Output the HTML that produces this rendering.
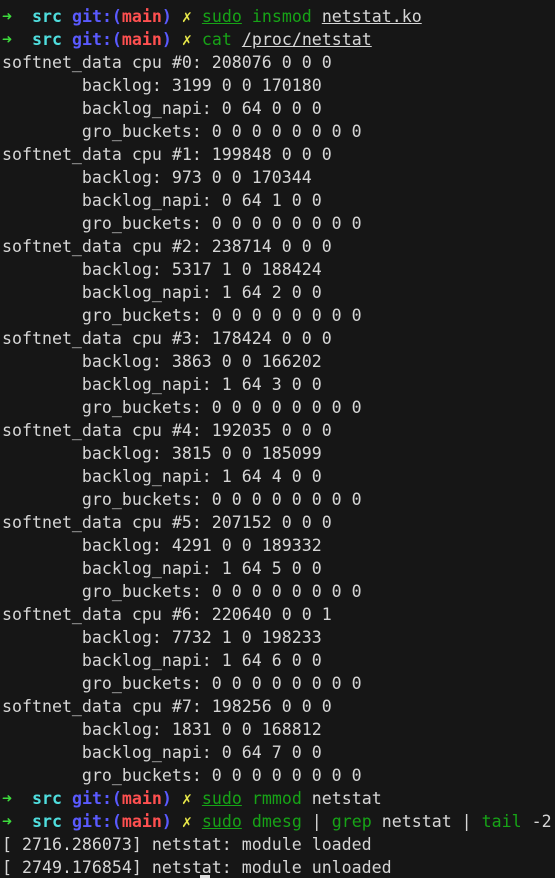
<!DOCTYPE html>
<html><head><meta charset="utf-8"><style>
html,body{margin:0;padding:0;background:#161616;width:555px;height:878px;overflow:hidden}
pre{margin:0;padding:4.5px 0 0 2px;font-family:"DejaVu Sans Mono","Liberation Mono",monospace;font-size:16.6px;line-height:23px;color:#d6d6d6;white-space:pre}
.a{color:#3ddc3d;font-weight:bold}.s{color:#4fdede;font-weight:bold}.g{color:#5a5aff;font-weight:bold}.m{color:#ff5050;font-weight:bold}.x{color:#e8e84a}.c{color:#17a317}.u{text-decoration:underline}
.cur{position:absolute;left:200px;top:875px;width:10px;height:3px;background:#ddd}
</style></head><body><pre><span class="a">➜</span>  <span class="s">src</span> <span class="g">git:(</span><span class="m">main</span><span class="g">)</span> <span class="x">✗</span> <span class="c u">sudo</span> <span class="c">insmod</span> <span class="u">netstat.ko</span>
<span class="a">➜</span>  <span class="s">src</span> <span class="g">git:(</span><span class="m">main</span><span class="g">)</span> <span class="x">✗</span> <span class="c">cat</span> <span class="u">/proc/netstat</span>
softnet_data cpu #0: 208076 0 0 0
        backlog: 3199 0 0 170180
        backlog_napi: 0 64 0 0 0
        gro_buckets: 0 0 0 0 0 0 0 0
softnet_data cpu #1: 199848 0 0 0
        backlog: 973 0 0 170344
        backlog_napi: 0 64 1 0 0
        gro_buckets: 0 0 0 0 0 0 0 0
softnet_data cpu #2: 238714 0 0 0
        backlog: 5317 1 0 188424
        backlog_napi: 1 64 2 0 0
        gro_buckets: 0 0 0 0 0 0 0 0
softnet_data cpu #3: 178424 0 0 0
        backlog: 3863 0 0 166202
        backlog_napi: 1 64 3 0 0
        gro_buckets: 0 0 0 0 0 0 0 0
softnet_data cpu #4: 192035 0 0 0
        backlog: 3815 0 0 185099
        backlog_napi: 1 64 4 0 0
        gro_buckets: 0 0 0 0 0 0 0 0
softnet_data cpu #5: 207152 0 0 0
        backlog: 4291 0 0 189332
        backlog_napi: 1 64 5 0 0
        gro_buckets: 0 0 0 0 0 0 0 0
softnet_data cpu #6: 220640 0 0 1
        backlog: 7732 1 0 198233
        backlog_napi: 1 64 6 0 0
        gro_buckets: 0 0 0 0 0 0 0 0
softnet_data cpu #7: 198256 0 0 0
        backlog: 1831 0 0 168812
        backlog_napi: 0 64 7 0 0
        gro_buckets: 0 0 0 0 0 0 0 0
<span class="a">➜</span>  <span class="s">src</span> <span class="g">git:(</span><span class="m">main</span><span class="g">)</span> <span class="x">✗</span> <span class="c u">sudo</span> <span class="c">rmmod</span> netstat
<span class="a">➜</span>  <span class="s">src</span> <span class="g">git:(</span><span class="m">main</span><span class="g">)</span> <span class="x">✗</span> <span class="c u">sudo</span> <span class="c">dmesg</span> | <span class="c">grep</span> netstat | <span class="c">tail</span> -2
[ 2716.286073] netstat: module loaded
[ 2749.176854] netstat: module unloaded</pre><div class="cur"></div></body></html>
